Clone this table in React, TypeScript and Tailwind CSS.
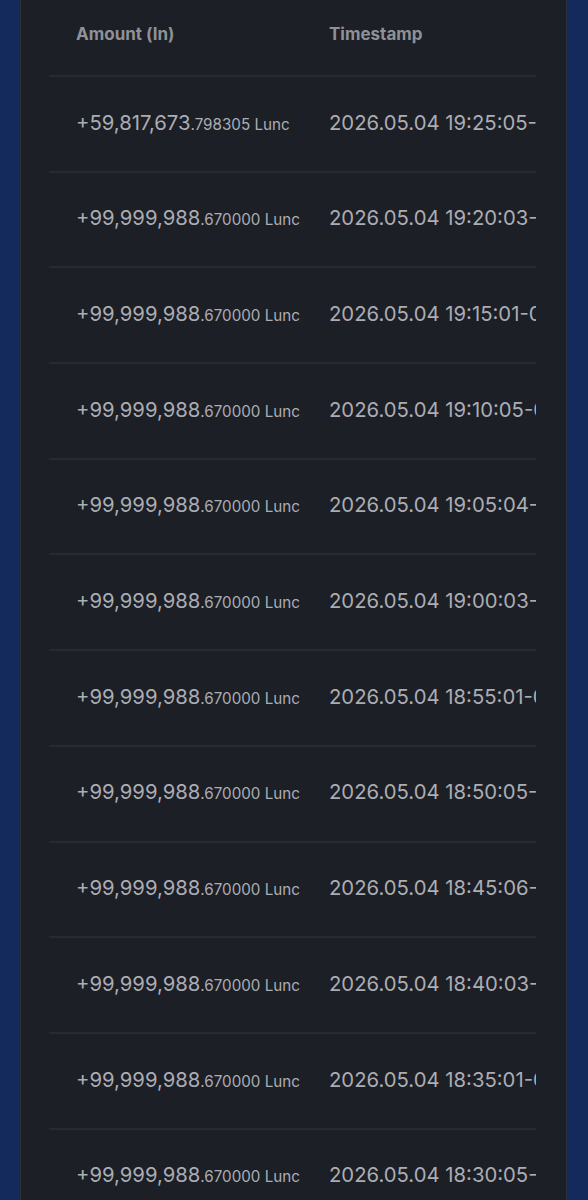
import React from 'react';

interface Transfer {
  whole: string;
  frac: string;
  time: string;
}

const transfers: Transfer[] = [
  { whole: '+59,817,673', frac: '.798305', time: '2026.05.04 19:25:05-04:00' },
  { whole: '+99,999,988', frac: '.670000', time: '2026.05.04 19:20:03-04:00' },
  { whole: '+99,999,988', frac: '.670000', time: '2026.05.04 19:15:01-04:00' },
  { whole: '+99,999,988', frac: '.670000', time: '2026.05.04 19:10:05-04:00' },
  { whole: '+99,999,988', frac: '.670000', time: '2026.05.04 19:05:04-04:00' },
  { whole: '+99,999,988', frac: '.670000', time: '2026.05.04 19:00:03-04:00' },
  { whole: '+99,999,988', frac: '.670000', time: '2026.05.04 18:55:01-04:00' },
  { whole: '+99,999,988', frac: '.670000', time: '2026.05.04 18:50:05-04:00' },
  { whole: '+99,999,988', frac: '.670000', time: '2026.05.04 18:45:06-04:00' },
  { whole: '+99,999,988', frac: '.670000', time: '2026.05.04 18:40:03-04:00' },
  { whole: '+99,999,988', frac: '.670000', time: '2026.05.04 18:35:01-04:00' },
  { whole: '+99,999,988', frac: '.670000', time: '2026.05.04 18:30:05-04:00' },
];

const App: React.FC = () => {
  return (
    <div className="w-[588px] h-[1200px] overflow-hidden bg-[#152a5c] pl-[20px] pr-[21px] font-['Inter',sans-serif]">
      <div className="h-full bg-[#1c1f26] border-x border-[#2c3039] px-[28px]">
        {/* table viewport, scrolls sideways */}
        <div className="w-[487px] overflow-hidden">
          <div className="flex h-[75px] items-start pt-[24px] text-[17px] font-bold leading-[20px] text-[#8f9197]">
            <div className="w-[280px] shrink-0 pl-[27px]">Amount (In)</div>
            <div className="whitespace-nowrap">Timestamp</div>
          </div>

          {transfers.map((t, i) => (
            <div key={i} className="flex h-[95.7px] items-center border-t-2 border-[#272a32] text-[#abadb3]">
              <div className="w-[280px] shrink-0 pl-[27px] whitespace-nowrap pb-[2px]">
                <span className="text-[20.3px]">{t.whole}</span>
                <span className="text-[15.2px]">{t.frac} Lunc</span>
              </div>
              <div className="whitespace-nowrap text-[20.3px] pb-[2px]">{t.time}</div>
            </div>
          ))}
        </div>
      </div>
    </div>
  );
};

export default App;
